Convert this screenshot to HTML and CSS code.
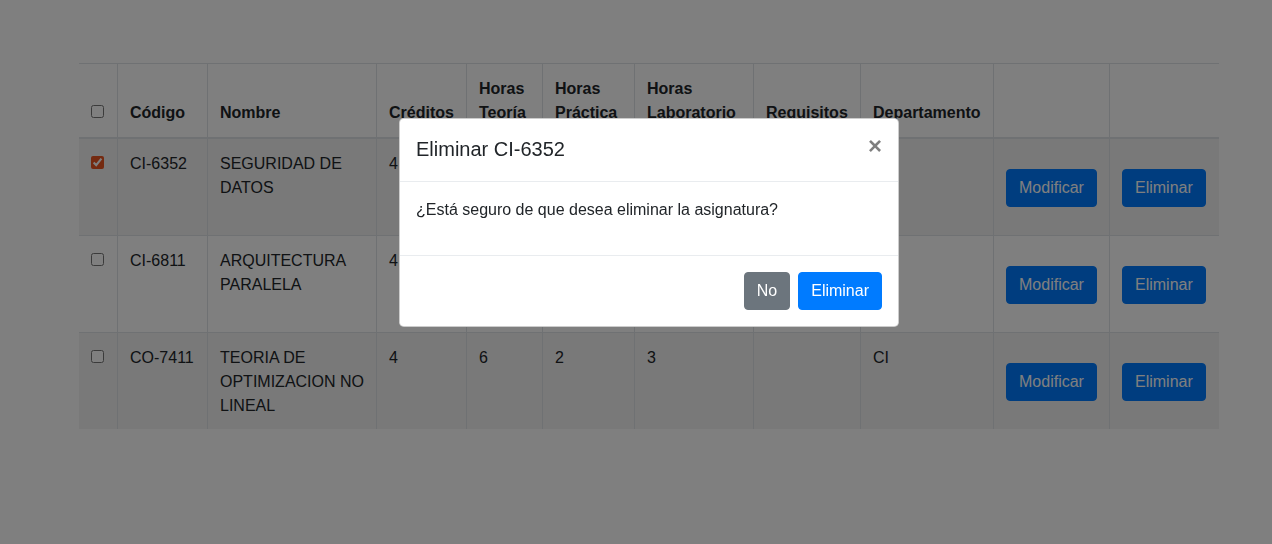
FILE: index.html
```html
<!DOCTYPE html>
<html lang="es">
<head>
<meta charset="utf-8">
<title>Asignaturas</title>
<link rel="stylesheet" href="styles.css">
</head>
<body>
<main class="page">
  <table class="table">
    <thead>
      <tr>
        <th class="c-check"><input type="checkbox" class="check"></th>
        <th class="c-code">Código</th>
        <th class="c-name">Nombre</th>
        <th class="c-cred">Créditos</th>
        <th class="c-ht">Horas Teoría</th>
        <th class="c-hp">Horas Práctica</th>
        <th class="c-hl">Horas Laboratorio</th>
        <th class="c-req">Requisitos</th>
        <th class="c-dep">Departamento</th>
        <th class="c-act1"></th>
        <th class="c-act2"></th>
      </tr>
    </thead>
    <tbody>
      <tr>
        <td><input type="checkbox" class="check" checked></td>
        <td>CI-6352</td>
        <td>SEGURIDAD DE DATOS</td>
        <td>4</td>
        <td></td>
        <td></td>
        <td></td>
        <td></td>
        <td></td>
        <td class="act"><button class="btn btn-primary">Modificar</button></td>
        <td class="act"><button class="btn btn-primary">Eliminar</button></td>
      </tr>
      <tr>
        <td><input type="checkbox" class="check"></td>
        <td>CI-6811</td>
        <td>ARQUITECTURA PARALELA</td>
        <td>4</td>
        <td></td>
        <td></td>
        <td></td>
        <td></td>
        <td></td>
        <td class="act"><button class="btn btn-primary">Modificar</button></td>
        <td class="act"><button class="btn btn-primary">Eliminar</button></td>
      </tr>
      <tr>
        <td><input type="checkbox" class="check"></td>
        <td>CO-7411</td>
        <td>TEORIA DE OPTIMIZACION NO LINEAL</td>
        <td>4</td>
        <td>6</td>
        <td>2</td>
        <td>3</td>
        <td></td>
        <td>CI</td>
        <td class="act"><button class="btn btn-primary">Modificar</button></td>
        <td class="act"><button class="btn btn-primary">Eliminar</button></td>
      </tr>
    </tbody>
  </table>
</main>

<div class="backdrop"></div>
<div class="modal" role="dialog" aria-labelledby="modal-title">
  <div class="modal-header">
    <h5 class="modal-title" id="modal-title">Eliminar CI-6352</h5>
    <button type="button" class="close" aria-label="Cerrar">×</button>
  </div>
  <div class="modal-body">
    <p>¿Está seguro de que desea eliminar la asignatura?</p>
  </div>
  <div class="modal-footer">
    <button type="button" class="btn btn-secondary">No</button>
    <button type="button" class="btn btn-primary">Eliminar</button>
  </div>
</div>
</body>
</html>
```

FILE: styles.css
```css
*, *::before, *::after {
  box-sizing: border-box;
}

html, body {
  margin: 0;
  height: 100%;
}

body {
  font-family: "Liberation Sans", Arial, sans-serif;
  font-size: 16px;
  line-height: 1.5;
  color: #212529;
  background: #fff;
  overflow: hidden;
}

.page {
  padding: 63px 0 0 79px;
}

.table {
  width: 1140px;
  table-layout: fixed;
  border-collapse: separate;
  border-spacing: 0;
}

.table th,
.table td {
  padding: 12px;
  vertical-align: top;
  text-align: left;
  border-top: 1px solid #dee2e6;
}

.table th + th,
.table td + td {
  border-left: 1px solid #dee2e6;
}

.table thead th {
  vertical-align: bottom;
  font-weight: 700;
  padding-top: 13px;
  padding-bottom: 12px;
  border-bottom: 2px solid #dee2e6;
}

.table tbody tr:first-child td {
  border-top: 0;
}

.table tbody td {
  box-sizing: content-box;
  height: 72px;
  padding-top: 13px;
  padding-bottom: 11px;
}

.table tbody tr:nth-of-type(odd) {
  background-color: rgba(0, 0, 0, 0.05);
}

.table td.act {
  vertical-align: middle;
}

.c-check { width: 38px; }
.c-code { width: 90px; }
.c-name { width: 169px; }
.c-cred { width: 90px; }
.c-ht { width: 76px; }
.c-hp { width: 92px; }
.c-hl { width: 119px; }
.c-req { width: 107px; }
.c-dep { width: 133px; }
.c-act1 { width: 116px; }
.c-act2 { width: 110px; }

.check {
  margin: 0;
  width: 13px;
  height: 13px;
  accent-color: #e95420;
}

.btn {
  display: inline-block;
  font-family: inherit;
  font-size: 16px;
  line-height: 1.5;
  font-weight: 400;
  padding: 6px 12px;
  border: 1px solid transparent;
  border-radius: 4px;
  color: #fff;
  cursor: pointer;
}

.btn-primary {
  background-color: #007bff;
  border-color: #007bff;
}

.btn-secondary {
  background-color: #6c757d;
  border-color: #6c757d;
}

.backdrop {
  position: fixed;
  inset: 0;
  background: rgba(0, 0, 0, 0.5);
}

.modal {
  position: fixed;
  top: 118px;
  left: 399px;
  width: 500px;
  background: #fff;
  border: 1px solid rgba(0, 0, 0, 0.2);
  border-radius: 4.8px;
}

.modal-header {
  display: flex;
  align-items: flex-start;
  justify-content: space-between;
  padding: 15px 16px 17px;
  border-bottom: 1px solid #e9ecef;
}

.modal-title {
  margin: 0;
  font-size: 20px;
  font-weight: 500;
  line-height: 1.5;
}

.close {
  padding: 16px;
  margin: -16px -16px -16px auto;
  background: transparent;
  border: 0;
  font-family: inherit;
  font-size: 24px;
  font-weight: 700;
  line-height: 1;
  color: #000;
  text-shadow: 0 1px 0 #fff;
  opacity: 0.5;
  cursor: pointer;
}

.modal-body {
  padding: 16px 16px 17px;
}

.modal-body p {
  margin: 0 0 16px;
}

.modal-footer {
  display: flex;
  align-items: center;
  justify-content: flex-end;
  gap: 8px;
  padding: 16px;
  border-top: 1px solid #e9ecef;
}
```
